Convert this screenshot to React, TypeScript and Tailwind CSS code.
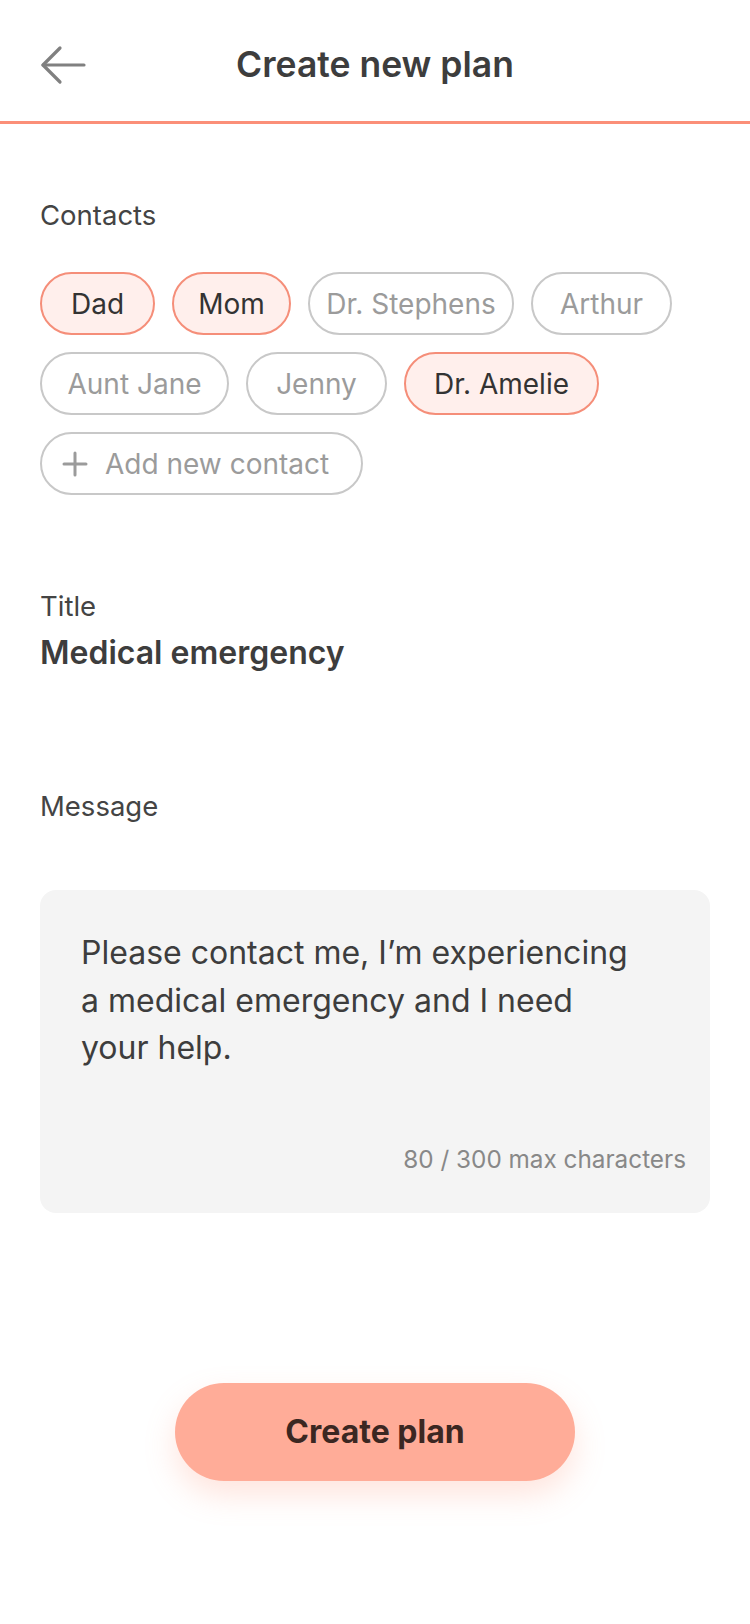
import React from 'react';

type Contact = { name: string; selected: boolean; width: string };

// chip widths follow the mockup, text stays centred
const contacts: Contact[] = [
  { name: 'Dad', selected: true, width: 'w-[115px]' },
  { name: 'Mom', selected: true, width: 'w-[119px]' },
  { name: 'Dr. Stephens', selected: false, width: 'w-[206px]' },
  { name: 'Arthur', selected: false, width: 'w-[141px]' },
  { name: 'Aunt Jane', selected: false, width: 'w-[189px]' },
  { name: 'Jenny', selected: false, width: 'w-[141px]' },
  { name: 'Dr. Amelie', selected: true, width: 'w-[195px]' },
];

function Chip({ contact }: { contact: Contact }) {
  const base = `${contact.width} h-[63px] rounded-full border-2 text-[28px] flex items-center justify-center whitespace-nowrap`;
  return (
    <button
      className={
        contact.selected
          ? `${base} border-[#f58e79] bg-[#ffefec] text-[#333333]`
          : `${base} border-[#c8c8c8] bg-white text-[#9b9b9b]`
      }
    >
      {contact.name}
    </button>
  );
}

export default function App() {
  return (
    <div className="w-[750px] min-h-[1624px] bg-white font-['Inter',sans-serif]">
      {/* Header */}
      <header className="relative h-[124px] flex justify-center pt-[44px] border-b-[3px] border-[#fb8f78]">
        <button className="absolute left-[40px] top-[45px]">
          <svg width="46" height="40" viewBox="0 0 46 40" fill="none">
            <path d="M3 20H44" stroke="#808080" strokeWidth="3.2" strokeLinecap="round" />
            <path d="M20 3L3 20L20 37" stroke="#808080" strokeWidth="3.2" strokeLinecap="round" strokeLinejoin="round" />
          </svg>
        </button>
        <h1 className="text-[35.5px] leading-[42px] font-semibold text-[#3d3d3d]">Create new plan</h1>
      </header>

      <main className="px-[40px]">
        {/* Contacts */}
        <section className="pt-[75px]">
          <div className="text-[27.5px] leading-[32px] text-[#444444]">Contacts</div>
          <div className="mt-[41px] flex flex-wrap gap-x-[17px] gap-y-[17px]">
            {contacts.map((c) => (
              <Chip key={c.name} contact={c} />
            ))}
            <button className="w-[323px] h-[63px] pl-[20px] rounded-full border-2 border-[#c8c8c8] bg-white text-[#9b9b9b] text-[28px] flex items-center gap-[17px] whitespace-nowrap">
              <svg width="26" height="26" viewBox="0 0 26 26" fill="none">
                <path d="M13 2V24M2 13H24" stroke="#9b9b9b" strokeWidth="3" strokeLinecap="round" />
              </svg>
              Add new contact
            </button>
          </div>
        </section>

        {/* Title */}
        <section className="pt-[95px]">
          <div className="text-[27.5px] leading-[32px] text-[#444444]">Title</div>
          <div className="mt-[12px] text-[32px] leading-[38px] font-semibold text-[#3d3d3d]">Medical emergency</div>
        </section>

        {/* Message */}
        <section className="pt-[118px]">
          <div className="text-[27.5px] leading-[32px] text-[#444444]">Message</div>
          <div className="mt-[68px] h-[323px] rounded-[16px] bg-[#f4f4f4] pl-[41px] pr-[24px] pt-[39px] pb-[39px] flex flex-col">
            <p className="text-[32px] leading-[47.5px] text-[#3d3d3d]">
              Please contact me, I’m experiencing
              <br />
              a medical emergency and I need
              <br />
              your help.
            </p>
            <div className="mt-auto text-right text-[24.3px] leading-[30px] text-[#888888]">80 / 300 max characters</div>
          </div>
        </section>

        {/* Action */}
        <div className="pt-[170px] flex justify-center">
          <button className="w-[400px] h-[98px] rounded-full bg-[#ffac98] text-[32px] font-bold text-[#3b2722] shadow-[0_14px_30px_rgba(255,150,125,0.25)]">
            Create plan
          </button>
        </div>
      </main>
    </div>
  );
}
